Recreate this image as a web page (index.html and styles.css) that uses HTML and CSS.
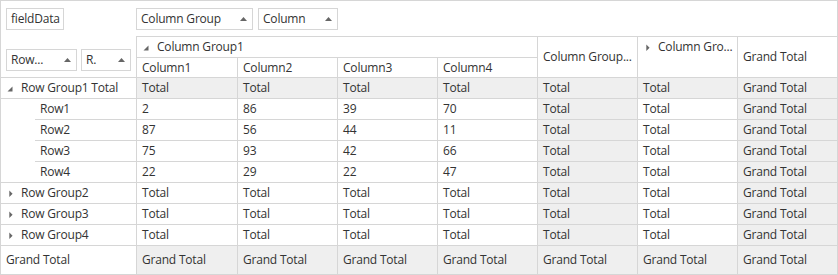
FILE: index.html
```html
<!DOCTYPE html>
<html>
<head>
<meta charset="utf-8">
<link rel="stylesheet" href="styles.css">
</head>
<body>
<div class="pivot">
  <div class="toolbar">
    <div class="tb-left">
      <div class="field w-fielddata">fieldData</div>
    </div>
    <div class="tb-right">
      <div class="field w-colgroup"><span class="ftext">Column Group</span><svg class="arrow" width="7" height="4" viewBox="0 0 7 4"><path d="M0 4 L3.5 0 L7 4 Z"/></svg></div>
      <div class="field w-column"><span class="ftext">Column</span><svg class="arrow" width="7" height="4" viewBox="0 0 7 4"><path d="M0 4 L3.5 0 L7 4 Z"/></svg></div>
    </div>
  </div>
  <div class="grid">
    <div class="corner">
      <div class="field w-row"><span class="ftext">Row...</span><svg class="arrow" width="7" height="4" viewBox="0 0 7 4"><path d="M0 4 L3.5 0 L7 4 Z"/></svg></div>
      <div class="field w-r"><span class="ftext">R.</span><svg class="arrow" width="7" height="4" viewBox="0 0 7 4"><path d="M0 4 L3.5 0 L7 4 Z"/></svg></div>
    </div>
    <div class="ch cg1"><svg class="tog" width="15" height="20" viewBox="0 0 15 20"><path d="M6.5 8.5 L6.5 13.5 L1.5 13.5 Z"/></svg>Column Group1</div>
    <div class="ch tall mid c6">Column Group...</div>
    <div class="ch tall c7"><svg class="tog" width="15" height="20" viewBox="0 0 15 20"><path d="M3.3 7.5 L6.6 10.8 L3.3 14.1 Z"/></svg>Column Gro...</div>
    <div class="ch tall mid c8">Grand Total</div>
    <div class="ch2">Column1</div>
    <div class="ch2">Column2</div>
    <div class="ch2">Column3</div>
    <div class="ch2">Column4</div>

    <div class="rh"><svg class="tog" width="15" height="20" viewBox="0 0 15 20"><path d="M6.5 8.5 L6.5 13.5 L1.5 13.5 Z"/></svg>Row Group1 Total</div>
    <div class="c g">Total</div><div class="c g">Total</div><div class="c g">Total</div><div class="c g">Total</div><div class="c g">Total</div><div class="c g">Total</div><div class="c g">Grand Total</div>

    <div class="rh child"><span class="lbl">Row1</span></div>
    <div class="c">2</div><div class="c">86</div><div class="c">39</div><div class="c">70</div><div class="c g">Total</div><div class="c">Total</div><div class="c g">Grand Total</div>

    <div class="rh child"><span class="lbl">Row2</span></div>
    <div class="c">87</div><div class="c">56</div><div class="c">44</div><div class="c">11</div><div class="c g">Total</div><div class="c">Total</div><div class="c g">Grand Total</div>

    <div class="rh child"><span class="lbl">Row3</span></div>
    <div class="c">75</div><div class="c">93</div><div class="c">42</div><div class="c">66</div><div class="c g">Total</div><div class="c">Total</div><div class="c g">Grand Total</div>

    <div class="rh child-last"><span class="lbl">Row4</span></div>
    <div class="c">22</div><div class="c">29</div><div class="c">22</div><div class="c">47</div><div class="c g">Total</div><div class="c">Total</div><div class="c g">Grand Total</div>

    <div class="rh"><svg class="tog" width="15" height="20" viewBox="0 0 15 20"><path d="M3.3 7.5 L6.6 10.8 L3.3 14.1 Z"/></svg>Row Group2</div>
    <div class="c">Total</div><div class="c">Total</div><div class="c">Total</div><div class="c">Total</div><div class="c g">Total</div><div class="c">Total</div><div class="c g">Grand Total</div>

    <div class="rh"><svg class="tog" width="15" height="20" viewBox="0 0 15 20"><path d="M3.3 7.5 L6.6 10.8 L3.3 14.1 Z"/></svg>Row Group3</div>
    <div class="c">Total</div><div class="c">Total</div><div class="c">Total</div><div class="c">Total</div><div class="c g">Total</div><div class="c">Total</div><div class="c g">Grand Total</div>

    <div class="rh"><svg class="tog" width="15" height="20" viewBox="0 0 15 20"><path d="M3.3 7.5 L6.6 10.8 L3.3 14.1 Z"/></svg>Row Group4</div>
    <div class="c">Total</div><div class="c">Total</div><div class="c">Total</div><div class="c">Total</div><div class="c g">Total</div><div class="c">Total</div><div class="c g">Grand Total</div>

    <div class="rh gt">Grand Total</div>
    <div class="c g gt">Grand Total</div><div class="c g gt">Grand Total</div><div class="c g gt">Grand Total</div><div class="c g gt">Grand Total</div><div class="c g gt">Grand Total</div><div class="c g gt">Grand Total</div><div class="c g gt">Grand Total</div>
  </div>
</div>
</body>
</html>
```
FILE: styles.css
```css
* { box-sizing: border-box; }
html, body { margin: 0; padding: 0; background: #fff; }
body {
  font-family: "Open Sans", "Noto Sans", sans-serif;
  font-size: 12px;
  letter-spacing: -0.2px;
  color: #333;
}
.pivot {
  width: 838px;
  border-top: 1px solid #d6d6d6;
  border-left: 1px solid #d6d6d6;
}
.toolbar {
  display: grid;
  grid-template-columns: 135px 1fr;
  height: 35px;
  padding-top: 7px;
  border-right: 1px solid #d6d6d6;
}
.tb-left { padding-left: 5px; }
.tb-right { display: flex; gap: 5px; }
.field {
  height: 22px;
  border: 1px solid #d6d6d6;
  background: #fff;
  display: flex;
  align-items: center;
  padding: 0 5px 0 4px;
  line-height: 20px;
  white-space: nowrap;
}
.ftext { flex: 1; overflow: hidden; }
.arrow { fill: #666; flex: none; }
.w-fielddata { width: 58px; }
.w-colgroup { width: 117px; }
.w-column { width: 80px; }
.w-row { width: 71px; }
.w-r { width: 50px; }

.grid {
  display: grid;
  grid-template-columns: 136px 101px repeat(6, 100px);
  grid-template-rows: 22px 20px repeat(8, 21px) 29px;
}
.grid > div {
  border-right: 1px solid #d6d6d6;
  border-bottom: 1px solid #d6d6d6;
  white-space: nowrap;
  overflow: hidden;
  line-height: 20px;
}
.corner {
  grid-column: 1;
  grid-row: 1 / 3;
  display: flex;
  align-items: flex-end;
  gap: 4px;
  padding: 0 0 6px 5px;
}
.ch { border-top: 1px solid #d6d6d6; padding: 0 5px; display: flex; }
.cg1 { grid-column: 2 / 6; grid-row: 1; }
.tall { grid-row: 1 / 3; }
.c6 { grid-column: 6; }
.c7 { grid-column: 7; }
.c8 { grid-column: 8; }
.mid { align-items: center; }
.ch2 { padding: 0 5px; line-height: 19px !important; }
.tog { fill: #666; flex: none; vertical-align: top; display: inline-block; }
.rh { padding: 0 5px; display: flex; }
.rh.gt { line-height: 28px !important; }
.c { padding: 0 5px; }
.c.gt { line-height: 28px; }
.g { background: #efefef; }
.grid > .child { border-bottom: none; display: flex; padding: 0; }
.grid > .child-last { display: flex; padding: 0; }
.lbl { flex: 1; margin-left: 34px; padding-left: 5px; }
.child .lbl { border-bottom: 1px solid #d6d6d6; }
```
